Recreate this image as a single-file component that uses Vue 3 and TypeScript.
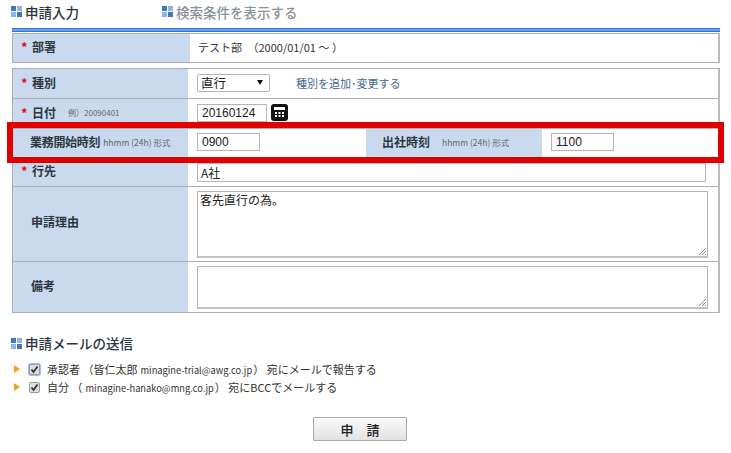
<script setup lang="ts">
const tile = [0, 6];
const mails = [
  { before: '承認者 （皆仁太郎', email: 'minagine-trial@awg.co.jp', after: '） 宛にメールで報告する', focus: true },
  { before: '自分 （', email: 'minagine-hanako@mng.co.jp', after: '） 宛にBCCでメールする', focus: false },
];
</script>

<template>
  <div class="page">
    <header class="head">
      <h2 class="title">
        <svg class="tile" width="11" height="11" viewBox="0 0 11 11"><template v-for="x in tile" :key="x"><rect :x="x" y="0" width="5" height="5" :fill="x ? '#8fb4de' : '#3f78b8'" /><rect :x="x" y="6" width="5" height="5" :fill="x ? '#3f78b8' : '#8fb4de'" /></template></svg>
        申請入力
      </h2>
      <a class="title toggle">
        <svg class="tile" width="11" height="11" viewBox="0 0 11 11"><template v-for="x in tile" :key="x"><rect :x="x" y="0" width="5" height="5" :fill="x ? '#8fb4de' : '#3f78b8'" /><rect :x="x" y="6" width="5" height="5" :fill="x ? '#3f78b8' : '#8fb4de'" /></template></svg>
        検索条件を表示する
      </a>
    </header>
    <div class="rule"></div>

    <section class="table first">
      <div class="row r-first">
        <div class="label wide"><i class="req">*</i>部署</div>
        <div class="cell dept">テスト部　（2000/01/01 ～ ）</div>
      </div>
    </section>

    <section class="table second">
      <div class="row r1">
        <div class="label"><i class="req">*</i>種別</div>
        <div class="cell">
          <span class="select">直行<b class="caret"></b></span>
          <a class="link">種別を追加･変更する</a>
        </div>
      </div>
      <div class="row r2">
        <div class="label"><i class="req">*</i>日付<small class="hint date-hint">例）20090401</small></div>
        <div class="cell">
          <span class="input date">20160124</span>
          <svg class="cal" width="17" height="17" viewBox="0 0 17 17">
            <rect width="17" height="17" rx="3" fill="#111" />
            <rect x="3" y="3" width="11" height="3" fill="#fff" />
            <path d="M4 8h2v2H4zM7.500 8h2v2h-2zM11 8h2v2h-2zM4 11h2v2H4zM7.500 11h2v2h-2zM11 11h2v2h-2z" fill="#fff" />
          </svg>
        </div>
      </div>
      <div class="row r3">
        <div class="label plain tight"><span class="squeeze">業務開始時刻</span><small class="hint">hhmm (24h) 形式</small></div>
        <div class="cell half"><span class="input time">0900</span></div>
        <div class="label plain second-label">出社時刻<small class="hint gap">hhmm (24h) 形式</small></div>
        <div class="cell"><span class="input time">1100</span></div>
      </div>
      <div class="row r4">
        <div class="label"><i class="req">*</i>行先</div>
        <div class="cell"><span class="input dest">A社</span></div>
      </div>
      <div class="row r5">
        <div class="label plain lift">申請理由</div>
        <div class="cell"><div class="area tall">客先直行の為。<svg class="grip" width="9" height="9" viewBox="0 0 9 9"><path d="M1 8l7-7M4 8l4-4M7 8l1-1" stroke="#8a8a8a" fill="none" /></svg></div></div>
      </div>
      <div class="row r6">
        <div class="label plain">備考</div>
        <div class="cell"><div class="area short"><svg class="grip" width="9" height="9" viewBox="0 0 9 9"><path d="M1 8l7-7M4 8l4-4M7 8l1-1" stroke="#8a8a8a" fill="none" /></svg></div></div>
      </div>
      <div class="mark"></div>
    </section>

    <h2 class="title mail-title">
      <svg class="tile" width="11" height="11" viewBox="0 0 11 11"><template v-for="x in tile" :key="x"><rect :x="x" y="0" width="5" height="5" :fill="x ? '#8fb4de' : '#3f78b8'" /><rect :x="x" y="6" width="5" height="5" :fill="x ? '#3f78b8' : '#8fb4de'" /></template></svg>
      申請メールの送信
    </h2>
    <ul class="mails">
      <li v-for="m in mails" :key="m.email">
        <span class="arrow"></span>
        <span class="check" :class="{ focus: m.focus }">
          <svg width="9" height="9" viewBox="0 0 9 9"><path d="M1.500 4.500l2 2.500 4-5.500" stroke="#333" stroke-width="1.800" fill="none" /></svg>
        </span>
        <span>{{ m.before }}<span class="email">{{ m.email }}</span>{{ m.after }}</span>
      </li>
    </ul>
    <div class="actions"><button class="submit" type="button">申　請</button></div>
  </div>
</template>

<style scoped>
.page {
  width: 731px;
  height: 453px;
  box-sizing: border-box;
  padding: 0 11px 0 12px;
  overflow: hidden;
  background: #fff;
  color: #333;
  font-family: "Noto Sans CJK JP", "Liberation Sans", sans-serif;
  font-size: 12px;
}
.head {
  height: 28px;
  box-sizing: border-box;
  padding-bottom: 5px;
  display: flex;
  align-items: center;
  gap: 84px;
}
.title {
  margin: 0;
  display: flex;
  align-items: center;
  gap: 3px;
  font-size: 13.5px;
  font-weight: 500;
  line-height: 18px;
  color: #2b3440;
}
.tile { flex: none; margin-left: -1px; }
.toggle { color: #8b9299; font-weight: 500; }
.rule {
  height: 4px;
  background: #6d9eea;
  border-top: 1px solid #2f74d8;
  border-bottom: 1px solid #2f74d8;
  box-sizing: border-box;
}
.table {
  box-sizing: border-box;
  border: 1px solid #aeaeae;
  border-right-width: 2px;
  border-right-color: #bdbdbd;
}
.first { margin-top: 1px; height: 30px; }
.second { margin-top: 5px; height: 245px; position: relative; }
.row {
  display: flex;
  box-sizing: border-box;
  border-bottom: 1px solid #aeaeae;
}
.r-first { height: 28px; border-bottom: 0; }
.r1 { height: 30px; }
.r2 { height: 30px; }
.r3 { height: 29px; }
.r4 { height: 29px; }
.r5 { height: 75px; }
.r6 { height: 50px; border-bottom: 0; }
.label {
  width: 175px;
  flex: none;
  box-sizing: border-box;
  padding: 0 0 3px 8px;
  display: flex;
  align-items: center;
  background: #c9daef;
  font-weight: 700;
  color: #2e3640;
  white-space: nowrap;
}
.wide { width: 177px; }
.plain { padding-left: 18px; }
.tight { padding-left: 17px; }
.lift { padding-bottom: 5px; }
.squeeze { letter-spacing: -0.3px; }
.req {
  width: 11px;
  font-style: normal;
  color: #e0101a;
  font-size: 13px;
  font-weight: 700;
}
.hint {
  margin-left: 3px;
  font-size: 8.5px;
  font-weight: 400;
  color: #666;
}
.date-hint { margin-left: 12px; font-size: 8px; }
.gap { margin-left: 12px; }
.cell {
  flex: 1;
  display: flex;
  align-items: center;
  padding: 0 0 2px 9px;
  min-width: 0;
  white-space: nowrap;
}
.half { flex: none; width: 178px; box-sizing: border-box; }
.second-label { width: 176px; padding-left: 16px; }
.dept { padding-left: 8px; font-size: 11px; }
.select {
  width: 73px;
  height: 18px;
  box-sizing: border-box;
  border: 1px solid #b5b5b5;
  border-radius: 2px;
  padding-left: 3px;
  display: flex;
  align-items: center;
  position: relative;
  font-size: 12.5px;
  color: #222;
}
.caret {
  position: absolute;
  right: 6px;
  top: 5px;
  border: 3px solid transparent;
  border-top: 5px solid #111;
  border-bottom: 0;
}
.link { margin-left: 26px; color: #44698f; font-size: 11px; }
.input {
  box-sizing: border-box;
  height: 18px;
  border: 1px solid #b5b5b5;
  padding-left: 4px;
  display: flex;
  align-items: center;
  font-family: "Liberation Sans", sans-serif;
  font-size: 12px;
  color: #222;
}
.date { width: 70px; }
.cal { margin-left: 4px; }
.time { width: 63px; }
.dest { width: 509px; height: 19px; margin-top: 2px; padding-left: 3px; font-family: "Noto Sans CJK JP", sans-serif; }
.area {
  position: relative;
  width: 511px;
  box-sizing: border-box;
  border: 1px solid #b5b5b5;
  border-bottom: 2px solid #c2c2c2;
  padding-left: 2px;
  font-size: 12px;
  line-height: 16px;
  color: #222;
  align-self: flex-start;
}
.tall { height: 67px; margin-top: 4px; }
.short { height: 43px; margin-top: 4px; }
.grip { position: absolute; right: 0; bottom: 0; }
.mark {
  position: absolute;
  left: -6px;
  right: -6px;
  top: 53px;
  height: 41px;
  box-sizing: border-box;
  border: 6px solid #e00000;
  pointer-events: none;
}
.mail-title { margin-top: 21px; }
.mails {
  list-style: none;
  margin: 8px 0 0;
  padding: 0 0 0 2px;
  font-size: 11px;
  color: #333;
}
.mails li {
  height: 18px;
  display: flex;
  align-items: center;
  white-space: nowrap;
}
.email { font-size: 9.3px; padding: 0 1px 0 3px; }
.arrow {
  width: 0;
  height: 0;
  border-left: 6px solid #f5a31c;
  border-top: 4px solid transparent;
  border-bottom: 4px solid transparent;
}
.check {
  margin: 0 7px 0 9px;
  width: 11px;
  height: 11px;
  box-sizing: border-box;
  border: 1px solid #9a9a9a;
  border-radius: 2px;
  background: #dedede;
  display: flex;
  align-items: center;
  justify-content: center;
}
.focus { box-shadow: 0 0 0 1px #9dbdf0; }
.actions {
  margin-top: 21px;
  display: flex;
  padding-left: 301px;
}
.submit {
  width: 94px;
  height: 24px;
  padding: 0;
  border: 1px solid #aaa;
  border-radius: 1px;
  background: linear-gradient(#fafafa, #e2e2e2);
  font-family: "Noto Sans CJK JP", sans-serif;
  font-size: 13px;
  font-weight: 500;
  color: #222;
}
</style>
